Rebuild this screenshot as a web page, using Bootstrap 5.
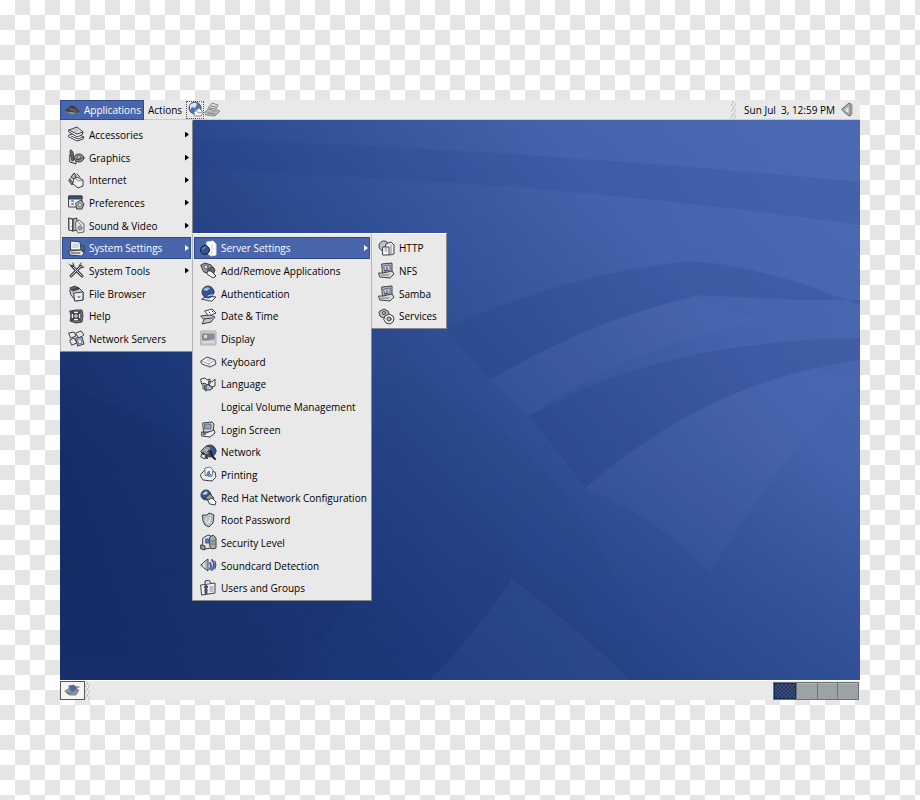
<!DOCTYPE html>
<html lang="en">
<head>
<meta charset="utf-8">
<meta name="viewport" content="width=device-width, initial-scale=1">
<title>Desktop</title>
<link href="https://cdn.jsdelivr.net/npm/bootstrap@5.3.0/dist/css/bootstrap.min.css" rel="stylesheet">
<style>
body{font:10px/16px "Open Sans","Noto Sans",sans-serif;color:#000;padding:100px 60px;background:repeating-conic-gradient(#e5e5e5 0 25%,#fff 0 50%) 0 0/30px 30px}
.desktop{min-height:calc(100vh - 200px)}
button{font:inherit;color:inherit;background:none;border:0;padding:0}
.panel{height:20px;background:#e9e9e9}
.panel-top{border-bottom:1px solid #c9cbd0}
.panel-bottom{border-top:1px solid #fff}
.ico{width:17px;height:17px;flex:none;stroke:#3c4045;stroke-width:1;fill:#d4d7d9;stroke-linejoin:round;stroke-linecap:round}
.app-btn{background:#4966ad;border:1px solid #2e4a8e;color:#fff;height:20px;width:84px;padding-left:3px;gap:3px}
.launch{border:1px dotted #555;width:18px;height:18px}
.grip{width:5px;height:18px;background:repeating-linear-gradient(120deg,#e9e9e9 0 2px,#c4c4c4 2px 3px)}
.wall{background:#2d4b8f}
.wall-art{width:100%;height:100%;inset:0}
.menu{background:#e9e9e9;border:1px solid;border-color:#fafafa #85888c #85888c #b2b5ba;padding:3px 1px 1px;z-index:2}
.menu-main{width:133px;border-top-color:#e9e9e9;padding-top:2px}
.menu-sub{width:180px;left:130px;top:-4px}
.menu-third{width:76px;left:177px;top:-4px}
.menu-row>button{height:23px;width:100%;padding-left:6px;gap:4px;text-align:left;white-space:nowrap}
.menu-third>.menu-row>button{padding-left:5px}
.menu-main>.menu-row:nth-child(3n)>button,
.menu-sub>.menu-row:nth-child(3n+1)>button,
.menu-third>.menu-row:nth-child(3n+1)>button{height:22px}
.menu .picked{background:#4966ad;color:#fff;outline:1px solid #2e4a8e;outline-offset:-1px}
.arrow{margin-left:auto;margin-right:2px;width:4px;height:6px;background:currentColor;clip-path:polygon(0 0,100% 50%,0 100%)}
.show-desk{border:1px solid #55585c;background:#f5f5f5;width:25px;height:19px}
.pager{border:1px solid #6f7478;height:18px;width:86px;background:#6f7478;gap:1px;margin-right:1px}
.pager button{background:#9ca3a7;border-top:1px solid #b2b8bb;flex:1 1 0}
.pager .current{background:repeating-conic-gradient(#454a5c 0 25%,#1d397e 0 50%) 0 0/4px 4px;border:1px solid #142a63}
</style>
<script src="https://cdn.jsdelivr.net/npm/bootstrap@5.3.0/dist/js/bootstrap.bundle.min.js"></script>
</head>
<body>
<svg class="d-none" aria-hidden="true">
<symbol id="hat" viewBox="0 0 17 17"><path d="M2 9l3-1 1-3 5 1 2 3 2 1-2 2-6 0z" fill="#4a4544" stroke="#333"/><path d="M6 8l6 2" stroke="#8b7770"/><path d="M3 11l5 2 5-1" stroke="#77777b"/></symbol>
<symbol id="globe" viewBox="0 0 17 17"><circle cx="8" cy="7" r="6" fill="#4f72b8" stroke="#556"/><path d="M3 4q5-4 7-1L8 7 5 6 3 9z" fill="#dde4f0" stroke="none"/><path d="M7 11l5-4 4 4-2 4-6 0z" fill="#f6f7f8" stroke="#888"/><path d="M9 10l3 2 3-1" fill="none" stroke="#999"/></symbol>
<symbol id="papers" viewBox="0 0 17 17"><path d="M1 11l5-4 10 3-5 5-9-1z" fill="#b8bbbd" stroke="#8a8c8e"/><path d="M4 7l4-5 6 2-3 6z" fill="#ddd" stroke="#8a8c8e"/><path d="M7 5l5 1M6 7l5 1M4 12l7 1" stroke="#77797b"/></symbol>
<symbol id="books" viewBox="0 0 17 17"><path d="M1 9l6-2 9 4-1 2-6 2-8-4z" fill="#fff"/><path d="M1 4l8-3 6 5-1 3-5 2-8-5z" fill="#e5e7e8"/><path d="M1 4l8 4 6-2M3 10l7 3 5-2" fill="none"/><path d="M4 4l5-2 3 2-4 2z" fill="#c3c8cb" stroke="none"/></symbol>
<symbol id="graphics" viewBox="0 0 17 17"><ellipse cx="11" cy="9" rx="5" ry="4" fill="#8d9297"/><path d="M2 6l6 6v3l-6-2z"/><path d="M3 1l2 2 1 8-2 1-2-9z" fill="#65696e"/><circle cx="11" cy="8" r="1.5" fill="#eee" stroke="#666"/><path d="M8 10l3 1 3-2" fill="none"/></symbol>
<symbol id="internet" viewBox="0 0 17 17"><path d="M3 5l3-4 2 2-1 4z" fill="#aeb3b8"/><path d="M6 7l3-2 6 3v6l-5 2-5-4z" fill="#eff0f1"/><path d="M8 7l3 2 4-1" fill="none" stroke="#888"/><path d="M2 7l3 4-1 2-3-4zM9 2l3 3" fill="#858b92"/></symbol>
<symbol id="prefs" viewBox="0 0 17 17"><path d="M1 2h13v11H1z" fill="#f1f1f1"/><path d="M1 2h13v3H1z" fill="#354e85"/><path d="M4 7h1M4 10h1" stroke-width="2" stroke="#718bb9"/><path d="M8 9l5-3 3 4-2 5-5 0z" fill="#b0b5ba"/><circle cx="12" cy="11" r="2" fill="#d8d8d8" stroke="#777"/></symbol>
<symbol id="video" viewBox="0 0 17 17"><path d="M1 1l4 1v12l-4-1zM5 2l4-1v12l-4 1z" fill="#b4b8bc"/><path d="M3 4v1M3 7v1M3 11v1" stroke="#fff" stroke-width="2"/><path d="M8 5l3-2 5 4v8l-6 1-2-4z" fill="#e2e4e5" stroke="#666"/><circle cx="12" cy="11" r="2" fill="#a1a7ac" stroke="#777"/><path d="M10 5l3 3" stroke="#888"/></symbol>
<symbol id="computer" viewBox="0 0 17 17"><path d="M3 1l9 1 1 8-10 0z" fill="#f5f6f7"/><path d="M5 3l6 1 0 4-7 0z" fill="#c9d6eb" stroke="none"/><path d="M1 11l12-1 3 3-2 3-12-1z" fill="#e3e5e8"/><path d="M3 13l9 0M13 5l3 1v6" fill="none"/></symbol>
<symbol id="tools" viewBox="0 0 17 17"><path d="M3 14L13 4M4 4l10 10" stroke-width="3"/><path d="M3 14l10-10M5 5l9 9" stroke="#d6d9dc"/><path d="M1 2l3 3 2-1-1-3M13 1l-2 3 2 2 3-1" fill="none"/></symbol>
<symbol id="files" viewBox="0 0 17 17"><path d="M2 5l8-3 5 5v8l-7 1-5-6z" fill="#c9cdd0"/><path d="M2 3l5-2 4 3-6 2z" fill="#60656b"/><path d="M6 8l9-1v8l-8 1z" fill="#eceeef"/><path d="M10 12h2M4 5l6-2" fill="none"/></symbol>
<symbol id="help" viewBox="0 0 17 17"><path d="M2 3l6-1 6 0 1 5-1 7-6 1-6-2 1-5z" fill="#777d83"/><circle cx="8" cy="8" r="5" fill="#f1f1f1"/><circle cx="8" cy="8" r="2.500" fill="#b7bbc0"/><path d="M4 4l2 2M12 4l-2 2M4 12l2-2M12 12l-2-2" stroke-width="2"/></symbol>
<symbol id="servers" viewBox="0 0 17 17"><path d="M1 3l5-1 2 4-5 2zM8 3l5-2 3 4-5 3zM2 10l4-2 3 5-5 2z" fill="#e7e9eb"/><path d="M8 8l6-1 2 7-6 2z" fill="#bdcbe2"/><path d="M10 9l3 0 1 4-3 1z" fill="#e8edf4" stroke="#778"/></symbol>
<symbol id="server" viewBox="0 0 17 17"><path d="M7 2l6-1 3 3v11l-5 1-4-3z" fill="#fff" stroke="#ddd"/><path d="M12 4v11" stroke="#ccc"/><circle cx="5" cy="10" r="4.500" fill="#34558f" stroke="#18213a"/><path d="M3 9l2-2" fill="none" stroke="#a7bfe6"/></symbol>
<symbol id="addremove" viewBox="0 0 17 17"><path d="M1 3l4-2 6 2 3 5-4 4-6-2z" fill="#93989d"/><circle cx="6" cy="5" r="2" fill="#dcdcdc" stroke="#666"/><path d="M8 7l5-2 2 3-2 5-3-1z" fill="#60656b"/><path d="M8 9l3 0 5 5-3 2-6-4z" fill="#f3f3f3"/></symbol>
<symbol id="auth" viewBox="0 0 17 17"><path d="M2 14l5-3 9 1-4 4z" fill="#eee"/><circle cx="8" cy="7" r="6" fill="#315399"/><path d="M3 5q3-4 7-2L7 6z" fill="#a9bddb" stroke="none"/><path d="M8 11l3-1 3 0" stroke="#dce3ed" fill="none"/></symbol>
<symbol id="date" viewBox="0 0 17 17"><path d="M5 3l7-2 4 4-7 3z" fill="#fff"/><path d="M9 4l1 1M12 3l1 1"/><path d="M1 8l9-1 5 2-4 5-9 2 2-4z" fill="#c1c6c9"/><path d="M4 11l8-1" fill="none"/></symbol>
<symbol id="display" viewBox="0 0 17 17"><path d="M1 1h15v14H1z" fill="#c6c8ca" stroke="#b2b4b6"/><path d="M3 4h6v6H3zM10 4h4v5h-4z" fill="#8b9195" stroke="#7e8285"/><path d="M4 5h3v3H4z" fill="#d9dddf" stroke="none"/><path d="M3 12h11" stroke="#eee"/></symbol>
<symbol id="keyboard" viewBox="0 0 17 17"><path d="M1 8l6-4 8 3 1 4-6 3-8-3z" fill="#fafafa"/><path d="M1 8l8 3 6-4M9 11v3" fill="none" stroke="#999"/><path d="M5 8l4 1 4-2-5-2z" fill="#d4d6d8" stroke="none"/></symbol>
<symbol id="lang" viewBox="0 0 17 17"><path d="M1 3l4-1 2 2 3-1v5l-3 1-2-2-3 1zM9 5l3 1 3-3v7l-3 1-3-2z" fill="#eceff2"/><path d="M5 9l4 0 4 3-3 2-5 0z" fill="#a7badb"/><path d="M3 8v5M6 10v5" fill="none"/></symbol>
<symbol id="login" viewBox="0 0 17 17"><path d="M3 2l9-1 2 2-1 8-9 0z" fill="#d3d6d9"/><path d="M5 3l6 0v5H5z" fill="#8fa3c6" stroke="#667"/><path d="M2 11l4 1 8-3 1 3-5 4-8-1z" fill="#f0f0f0"/><circle cx="4" cy="13" r="1" fill="#fff"/></symbol>
<symbol id="network" viewBox="0 0 17 17"><circle cx="10" cy="7" r="6" fill="#365290"/><path d="M1 7l5-5 5 1-1 6-6 3z" fill="#989da3"/><path d="M8 7l3 1 1 4 3 3M3 9l4 5" fill="none" stroke="#1d2126" stroke-width="2"/><path d="M2 10l4 1-1 4-4-2z" fill="#d9dbdd"/><path d="M5 5l3 2" stroke="#dadde0"/></symbol>
<symbol id="print" viewBox="0 0 17 17"><path d="M1 8l4-4 10 2 1 5-4 4-9-1-2-3z" fill="#eef0f1"/><path d="M5 9V2l5-1 3 3-1 6z" fill="#f5f8fb" stroke="#777"/><path d="M8 5h2v3h2l-3 3-3-2z" fill="#6582b7" stroke="none"/></symbol>
<symbol id="rhn" viewBox="0 0 17 17"><circle cx="6" cy="6" r="5" fill="#345290"/><path d="M2 5l4-3 2 2-3 2z" fill="#c8d3e6" stroke="none"/><path d="M5 9l5-4 4 4-2 3z" fill="#92999f"/><path d="M8 11l4-2 4 4-1 3-5-1z" fill="#fff"/></symbol>
<symbol id="shield" viewBox="0 0 17 17"><path d="M3 3l4 0 2-2 3 1 2 1-1 8-4 4-4-2-2-4z" fill="#c0c4c7"/><path d="M5 5l4 0 3-1-1 6-3 3-3-3z" fill="#e0e2e3" stroke="#abafb2"/><path d="M7 7h2M7 9h1" stroke="#999"/></symbol>
<symbol id="security" viewBox="0 0 17 17"><path d="M3 4l5-3 3 1v12l-5 1-3-2z" fill="#dfe3e8"/><path d="M6 5l3 0v4H6z" fill="#5f7db8" stroke="#415f9c"/><path d="M10 3l3-2 3 3v10l-4 1-2-2z" fill="#a6acb1"/><path d="M11 7h4M11 10h4" stroke="#666"/><path d="M1 11l4 1v4l-4-1z" fill="#999"/></symbol>
<symbol id="sound" viewBox="0 0 17 17"><path d="M1 8l3-3 4-3v12l-4-3z" fill="#b5b9bd"/><path d="M4 6v4" stroke="#fff"/><path d="M10 6q2 3 0 6M12 3q4 5 0 10" fill="none" stroke="#3658a3" stroke-width="2"/><path d="M15 4q2 4 0 8" fill="none"/></symbol>
<symbol id="users" viewBox="0 0 17 17"><path d="M1 5l14-2v10L2 15z" fill="#eef0f1"/><path d="M5 4V1l4-1 2 3" fill="#ddd"/><circle cx="6" cy="7" r="1.500" fill="#35579b"/><path d="M5 13V9h2v4z" fill="#4665a4"/><path d="M10 7h3M10 9h3M10 11h3" stroke="#888"/></symbol>
<symbol id="http" viewBox="0 0 17 17"><circle cx="6" cy="6" r="5" fill="#b8c4d8"/><path d="M8 4l5-2 3 3v9l-4 1-4-2z" fill="#eff1f2"/><path d="M5 7h6v8H5z" fill="#fff"/><path d="M7 9h2M7 11h2M13 5v9" stroke="#888"/></symbol>
<symbol id="share" viewBox="0 0 17 17"><path d="M4 2l10-1v9l-9 2z" fill="#b7bcc1"/><path d="M6 4l6-1v5l-5 1z" fill="#cfd8e6" stroke="#667"/><path d="M9 5v3l-2 1" fill="none"/><path d="M1 11l4 0 9-2 2 3-4 4-10-1z" fill="#d7dadd"/><path d="M3 13h8" stroke="#777"/></symbol>
<symbol id="gears" viewBox="0 0 17 17"><path d="M2 3l2-1 2-1 2 1 2 1 1 3-2 3-4 1-3-2-1-3z" fill="#b5b9bd"/><circle cx="6" cy="5" r="1.500" fill="#eee"/><path d="M7 8l2-1 2-1 2 1 2 1 1 3-1 3-3 2-4-1-2-3z" fill="#e7e9ea"/><circle cx="11" cy="11" r="2" fill="#b9bdc0"/></symbol>
<symbol id="speaker" viewBox="0 0 17 17"><path d="M3 8l7-6 2 1v11l-2 1-5-4z" fill="#a9abad" stroke="#66696b"/><path d="M6 8l4-3v7l-3-1z" fill="#e6e6e6" stroke="#aaa"/><path d="M13 4v9" stroke="#999"/></symbol>
<symbol id="desk" viewBox="0 0 17 17"><path d="M1 9l5-3 9 2-3 5-6 0z" fill="#8d9499" stroke="#888"/><path d="M5 4l5-1 3 4-5 3z" fill="#456bb1" stroke="#68717b"/><path d="M3 11l3 1M11 5l4 0" stroke="#555"/></symbol>
</svg>

<main class="desktop d-flex flex-column">
<header class="panel panel-top d-flex align-items-center">
  <button class="app-btn d-flex align-items-center"><svg class="ico"><use href="#hat"/></svg>Applications</button>
  <button class="px-1">Actions</button>
  <button class="launch d-flex align-items-center" aria-label="Web browser"><svg class="ico"><use href="#globe"/></svg></button>
  <button class="d-flex" aria-label="Mail"><svg class="ico"><use href="#papers"/></svg></button>
  <span class="grip ms-auto me-2"></span>
  <time class="me-1">Sun Jul &nbsp;3, 12:59 PM</time>
  <button class="d-flex me-1" aria-label="Volume"><svg class="ico"><use href="#speaker"/></svg></button>
</header>

<section class="wall position-relative flex-grow-1">
  <svg class="wall-art position-absolute" viewBox="0 0 800 560" preserveAspectRatio="none" aria-hidden="true">
    <defs>
      <linearGradient id="base" x1="0" y1="0.800" x2="1" y2="0.200"><stop offset="0" stop-color="#142962"/><stop offset=".25" stop-color="#1c3777"/><stop offset=".55" stop-color="#314f95"/><stop offset=".8" stop-color="#4563ac"/><stop offset="1" stop-color="#4b69b2"/></linearGradient>
      <linearGradient id="low" x1="0" y1="0" x2="0" y2="1"><stop offset=".6" stop-color="#203d82" stop-opacity="0"/><stop offset="1" stop-color="#203d82" stop-opacity=".3"/></linearGradient>
    </defs>
    <path d="M0 0H800V560H0z" fill="url(#base)"/>
    <path d="M0 0H800V560H0z" fill="url(#low)"/>
    <path d="M130 18Q470 30 800 62V105Q480 60 130 50z" fill="#1f3f86" opacity=".16"/>
    <path d="M385 208Q500 158 600 145Q660 130 800 185V180Q700 180 640 175Q530 200 430 260z" fill="#1d3a80" opacity=".2"/>
    <path d="M430 260Q540 196 632 178L700 200Q560 230 470 296z" fill="#5877bd" opacity=".12"/>
    <path d="M470 296Q600 220 800 218V240Q650 260 525 368z" fill="#1d3a80" opacity=".18"/>
    <path d="M525 368Q640 268 755 250L800 260Q710 350 650 452Q600 400 525 368z" fill="#5977bc" opacity=".12"/>
    <path d="M330 250Q470 300 540 430T650 560H450Q420 420 312 330z" fill="#1d3a80" opacity=".08"/>
    <path d="M370 560Q410 520 452 459Q520 510 570 560z" fill="#5270b5" opacity=".12"/>
    <path d="M0 270Q150 300 300 470L230 560H0z" fill="#102358" opacity=".1"/>
  </svg>

  <ul class="menu menu-main list-unstyled m-0 position-absolute top-0 start-0">
    <li class="menu-row"><button class="d-flex align-items-center"><svg class="ico"><use href="#books"/></svg>Accessories<i class="arrow"></i></button></li>
    <li class="menu-row"><button class="d-flex align-items-center"><svg class="ico"><use href="#graphics"/></svg>Graphics<i class="arrow"></i></button></li>
    <li class="menu-row"><button class="d-flex align-items-center"><svg class="ico"><use href="#internet"/></svg>Internet<i class="arrow"></i></button></li>
    <li class="menu-row"><button class="d-flex align-items-center"><svg class="ico"><use href="#prefs"/></svg>Preferences<i class="arrow"></i></button></li>
    <li class="menu-row"><button class="d-flex align-items-center"><svg class="ico"><use href="#video"/></svg>Sound &amp; Video<i class="arrow"></i></button></li>
    <li class="menu-row position-relative"><button class="picked d-flex align-items-center"><svg class="ico"><use href="#computer"/></svg>System Settings<i class="arrow"></i></button>
      <ul class="menu menu-sub list-unstyled m-0 position-absolute">
        <li class="menu-row position-relative"><button class="picked d-flex align-items-center"><svg class="ico"><use href="#server"/></svg>Server Settings<i class="arrow"></i></button>
          <ul class="menu menu-third list-unstyled m-0 position-absolute">
            <li class="menu-row"><button class="d-flex align-items-center"><svg class="ico"><use href="#http"/></svg>HTTP</button></li>
            <li class="menu-row"><button class="d-flex align-items-center"><svg class="ico"><use href="#share"/></svg>NFS</button></li>
            <li class="menu-row"><button class="d-flex align-items-center"><svg class="ico"><use href="#share"/></svg>Samba</button></li>
            <li class="menu-row"><button class="d-flex align-items-center"><svg class="ico"><use href="#gears"/></svg>Services</button></li>
          </ul></li>
        <li class="menu-row"><button class="d-flex align-items-center"><svg class="ico"><use href="#addremove"/></svg>Add/Remove Applications</button></li>
        <li class="menu-row"><button class="d-flex align-items-center"><svg class="ico"><use href="#auth"/></svg>Authentication</button></li>
        <li class="menu-row"><button class="d-flex align-items-center"><svg class="ico"><use href="#date"/></svg>Date &amp; Time</button></li>
        <li class="menu-row"><button class="d-flex align-items-center"><svg class="ico"><use href="#display"/></svg>Display</button></li>
        <li class="menu-row"><button class="d-flex align-items-center"><svg class="ico"><use href="#keyboard"/></svg>Keyboard</button></li>
        <li class="menu-row"><button class="d-flex align-items-center"><svg class="ico"><use href="#lang"/></svg>Language</button></li>
        <li class="menu-row"><button class="d-flex align-items-center"><svg class="ico"></svg>Logical Volume Management</button></li>
        <li class="menu-row"><button class="d-flex align-items-center"><svg class="ico"><use href="#login"/></svg>Login Screen</button></li>
        <li class="menu-row"><button class="d-flex align-items-center"><svg class="ico"><use href="#network"/></svg>Network</button></li>
        <li class="menu-row"><button class="d-flex align-items-center"><svg class="ico"><use href="#print"/></svg>Printing</button></li>
        <li class="menu-row"><button class="d-flex align-items-center"><svg class="ico"><use href="#rhn"/></svg>Red Hat Network Configuration</button></li>
        <li class="menu-row"><button class="d-flex align-items-center"><svg class="ico"><use href="#shield"/></svg>Root Password</button></li>
        <li class="menu-row"><button class="d-flex align-items-center"><svg class="ico"><use href="#security"/></svg>Security Level</button></li>
        <li class="menu-row"><button class="d-flex align-items-center"><svg class="ico"><use href="#sound"/></svg>Soundcard Detection</button></li>
        <li class="menu-row"><button class="d-flex align-items-center"><svg class="ico"><use href="#users"/></svg>Users and Groups</button></li>
      </ul></li>
    <li class="menu-row"><button class="d-flex align-items-center"><svg class="ico"><use href="#tools"/></svg>System Tools<i class="arrow"></i></button></li>
    <li class="menu-row"><button class="d-flex align-items-center"><svg class="ico"><use href="#files"/></svg>File Browser</button></li>
    <li class="menu-row"><button class="d-flex align-items-center"><svg class="ico"><use href="#help"/></svg>Help</button></li>
    <li class="menu-row"><button class="d-flex align-items-center"><svg class="ico"><use href="#servers"/></svg>Network Servers</button></li>
  </ul>
</section>

<footer class="panel panel-bottom d-flex align-items-center">
  <button class="show-desk d-flex align-items-center justify-content-center" aria-label="Show desktop"><svg class="ico"><use href="#desk"/></svg></button>
  <span class="grip"></span>
  <div class="pager d-flex ms-auto" role="group" aria-label="Workspaces">
    <button class="current" aria-label="Workspace 1"></button>
    <button aria-label="Workspace 2"></button>
    <button aria-label="Workspace 3"></button>
    <button aria-label="Workspace 4"></button>
  </div>
</footer>
</main>
</body>
</html>
